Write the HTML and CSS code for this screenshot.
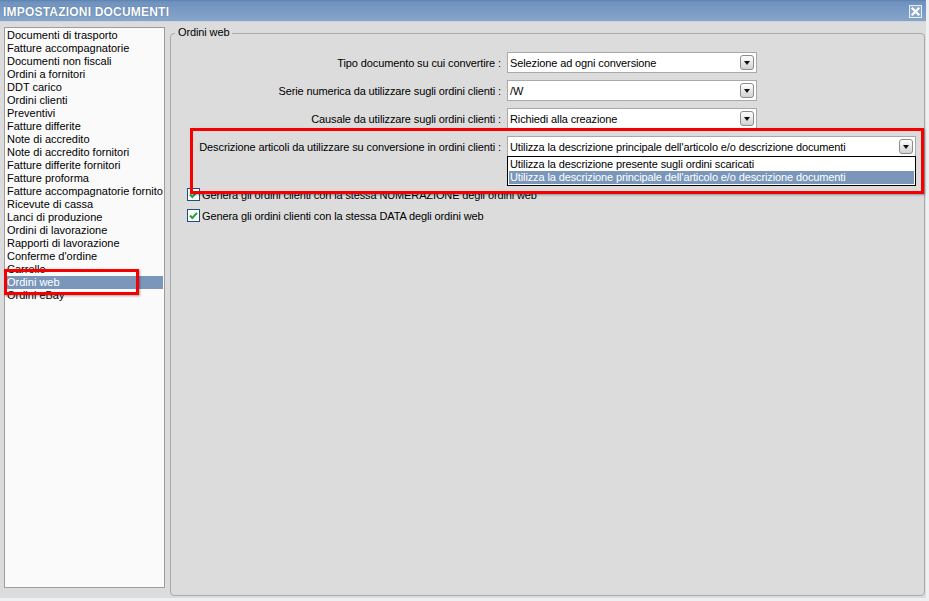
FILE: index.html
```html
<!DOCTYPE html>
<html>
<head>
<meta charset="utf-8">
<link rel="stylesheet" href="styles.css">
</head>
<body>
<div class="window">
  <div class="titlebar">
    <span class="title">IMPOSTAZIONI DOCUMENTI</span>
    <span class="close"><svg width="11" height="11" viewBox="0 0 11 11"><path d="M2.5 2.5 L8.5 8.5 M8.5 2.5 L2.5 8.5" stroke="#fff" stroke-width="2.2" stroke-linecap="square"/></svg></span>
  </div>
  <div class="content">
    <ul class="list">
      <li>Documenti di trasporto</li>
      <li>Fatture accompagnatorie</li>
      <li>Documenti non fiscali</li>
      <li>Ordini a fornitori</li>
      <li>DDT carico</li>
      <li>Ordini clienti</li>
      <li>Preventivi</li>
      <li>Fatture differite</li>
      <li>Note di accredito</li>
      <li>Note di accredito fornitori</li>
      <li>Fatture differite fornitori</li>
      <li>Fatture proforma</li>
      <li>Fatture accompagnatorie fornito</li>
      <li>Ricevute di cassa</li>
      <li>Lanci di produzione</li>
      <li>Ordini di lavorazione</li>
      <li>Rapporti di lavorazione</li>
      <li>Conferme d'ordine</li>
      <li>Carrello</li>
      <li class="selected">Ordini web</li>
      <li>Ordini eBay</li>
    </ul>
    <div class="group">
      <span class="legend">Ordini web</span>
      <div class="row">
        <span class="label">Tipo documento su cui convertire :</span>
        <div class="select"><span class="value">Selezione ad ogni conversione</span><span class="arrow"></span></div>
      </div>
      <div class="row">
        <span class="label">Serie numerica da utilizzare sugli ordini clienti :</span>
        <div class="select"><span class="value">/W</span><span class="arrow"></span></div>
      </div>
      <div class="row">
        <span class="label">Causale da utilizzare sugli ordini clienti :</span>
        <div class="select"><span class="value">Richiedi alla creazione</span><span class="arrow"></span></div>
      </div>
      <div class="row row-wide">
        <span class="label">Descrizione articoli da utilizzare su conversione in ordini clienti :</span>
        <div class="select select-wide"><span class="value">Utilizza la descrizione principale dell'articolo e/o descrizione documenti</span><span class="arrow"></span>
          <ul class="popup">
            <li>Utilizza la descrizione presente sugli ordini scaricati</li>
            <li class="selected">Utilizza la descrizione principale dell'articolo e/o descrizione documenti</li>
          </ul>
        </div>
      </div>
      <div class="check-row first-check">
        <span class="checkbox"><svg width="11" height="11" viewBox="0 0 11 11"><path d="M2 5.5 L4.3 8 L9 2.8" fill="none" stroke="#21a336" stroke-width="2"/></svg></span>
        <span>Genera gli ordini clienti con la stessa NUMERAZIONE degli ordini web</span>
      </div>
      <div class="check-row">
        <span class="checkbox"><svg width="11" height="11" viewBox="0 0 11 11"><path d="M2 5.5 L4.3 8 L9 2.8" fill="none" stroke="#21a336" stroke-width="2"/></svg></span>
        <span>Genera gli ordini clienti con la stessa DATA degli ordini web</span>
      </div>
    </div>
  </div>
</div>
<div class="highlight hl-list"></div>
<div class="highlight hl-form"></div>
</body>
</html>
```

FILE: styles.css
```css
html, body {
  margin: 0;
  padding: 0;
}
body {
  width: 929px;
  height: 601px;
  background: #eef0f2;
  font-family: "Liberation Sans", Arial, sans-serif;
  font-size: 11px;
  letter-spacing: -0.12px;
  color: #000;
  position: relative;
  overflow: hidden;
}
.window {
  width: 926px;
  height: 598px;
  background: #dcdcdc;
  display: flex;
  flex-direction: column;
}
.titlebar {
  height: 21px;
  border-bottom: 1px solid #c9d5e3;
  background: linear-gradient(#5e80ad 0px, #6f92bf 2px, #86a5ca 100%);
  display: flex;
  align-items: center;
  justify-content: space-between;
  padding: 0 4px 0 3px;
}
.title {
  color: #fff;
  font-weight: bold;
  font-size: 12px;
  letter-spacing: 0.2px;
  text-shadow: 0 0 1px #3b5b85;
  padding-top: 2px;
}
.close {
  width: 11px;
  height: 11px;
  border: 1px solid #e9eef5;
  background: #8aa8cc;
  display: flex;
  margin-top: 2px;
}
.content {
  flex: 1;
  display: flex;
  align-items: flex-start;
  padding: 5px 0 0 4px;
}
.list {
  list-style: none;
  margin: 0;
  padding: 1px 1px 0 0;
  box-sizing: border-box;
  width: 161px;
  height: 561px;
  background: #fafafa;
  border: 1px solid #9d9d9d;
  overflow: hidden;
  letter-spacing: 0;
}
.list li {
  height: 13px;
  line-height: 13px;
  padding-left: 2px;
  white-space: nowrap;
  overflow: hidden;
}
.list li.selected,
.popup li.selected {
  background: #7a97bb;
  color: #fff;
}
.group {
  position: relative;
  box-sizing: border-box;
  width: 755px;
  height: 563px;
  margin: 6px 0 0 5px;
  border: 1px solid #aaaaaa;
  border-radius: 4px;
  padding-top: 18px;
}
.legend {
  position: absolute;
  left: 4px;
  top: -8px;
  padding: 0 3px;
  background: #dcdcdc;
  line-height: 13px;
}
.row {
  display: flex;
  align-items: center;
  height: 21px;
  margin-bottom: 7px;
}
.row-wide {
  margin-top: 3px;
  margin-bottom: 0;
}
.label {
  width: 330px;
  text-align: right;
  white-space: nowrap;
  margin-right: 6px;
}
.select {
  position: relative;
  box-sizing: border-box;
  width: 250px;
  height: 21px;
  background: #fff;
  border: 1px solid #a9a9a9;
  display: flex;
  align-items: center;
  padding-left: 2px;
}
.select-wide {
  width: 409px;
}
.value {
  flex: 1;
  white-space: nowrap;
  overflow: hidden;
}
.arrow {
  position: relative;
  box-sizing: border-box;
  width: 14px;
  height: 15px;
  margin-right: 2px;
  border: 1px solid #8c8c8c;
  border-radius: 3px;
  background: linear-gradient(#ffffff, #e4e4e4 60%, #d2d2d2);
}
.arrow::after {
  content: "";
  position: absolute;
  left: 3px;
  top: 5px;
  border-left: 3.5px solid transparent;
  border-right: 3.5px solid transparent;
  border-top: 4px solid #111;
}
.popup {
  position: absolute;
  left: -1px;
  top: 19px;
  width: 409px;
  box-sizing: border-box;
  margin: 0;
  padding: 1px 1px 0 1px;
  list-style: none;
  background: #fff;
  border: 1px solid #000;
  height: 30px;
}
.popup li {
  height: 13px;
  line-height: 13px;
  padding-left: 1px;
  white-space: nowrap;
}
.check-row {
  display: flex;
  align-items: center;
  height: 13px;
  margin-left: 16px;
  margin-top: 8px;
  white-space: nowrap;
}
.first-check {
  margin-top: 31px;
}
.checkbox {
  box-sizing: border-box;
  width: 13px;
  height: 13px;
  border: 1px solid #1e4f7e;
  background: #fff;
  margin-right: 2px;
  display: flex;
}
.highlight {
  position: absolute;
  box-sizing: border-box;
  border: 3px solid #f40000;
  box-shadow: 1px 1px 2px rgba(0,0,0,0.35);
}
.hl-list {
  left: 4px;
  top: 269px;
  width: 135px;
  height: 26px;
}
.hl-form {
  left: 190px;
  top: 128px;
  width: 734px;
  height: 66px;
}
```
